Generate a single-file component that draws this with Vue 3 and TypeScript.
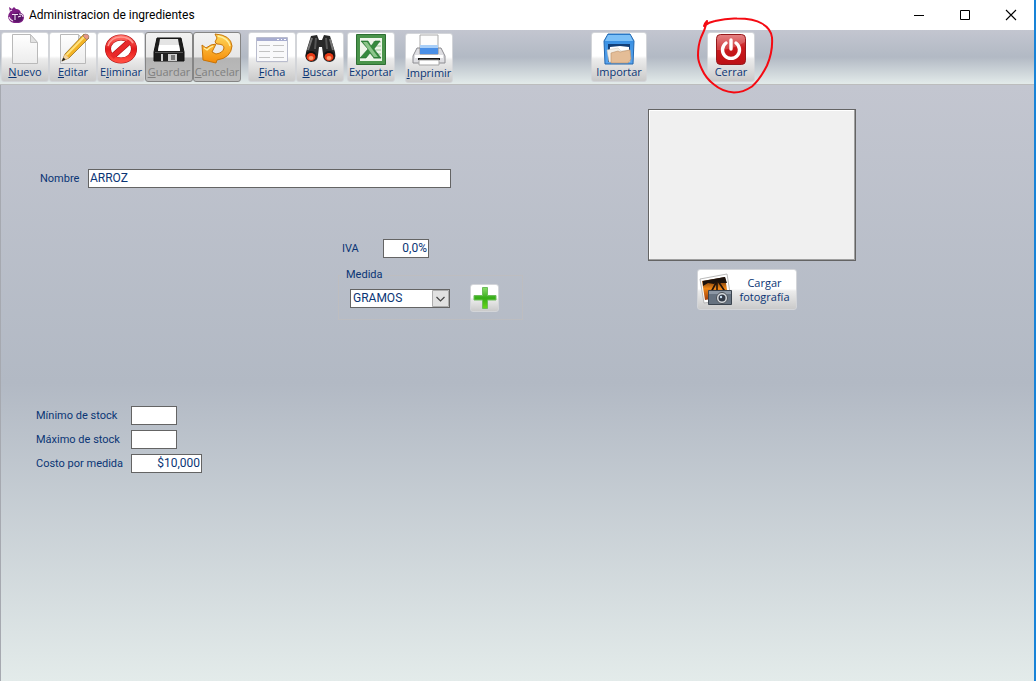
<script setup lang="ts">
import { ref } from 'vue'

interface ToolButton {
  id: string
  pre: string
  key: string
  post: string
  group: string
  disabled?: boolean
}

const tools: ToolButton[] = [
  { id: 'nuevo', pre: '', key: 'N', post: 'uevo', group: 'edit' },
  { id: 'editar', pre: '', key: 'E', post: 'ditar', group: 'edit' },
  { id: 'eliminar', pre: 'E', key: 'l', post: 'iminar', group: 'edit' },
  { id: 'guardar', pre: '', key: 'G', post: 'uardar', group: 'edit', disabled: true },
  { id: 'cancelar', pre: '', key: 'C', post: 'ancelar', group: 'edit', disabled: true },
  { id: 'ficha', pre: '', key: 'F', post: 'icha', group: 'view' },
  { id: 'buscar', pre: '', key: 'B', post: 'uscar', group: 'view' },
  { id: 'exportar', pre: 'Exportar', key: '', post: '', group: 'export' },
  { id: 'imprimir', pre: '', key: 'I', post: 'mprimir', group: 'print' },
  { id: 'importar', pre: 'Importar', key: '', post: '', group: 'import' },
  { id: 'cerrar', pre: 'Cerrar', key: '', post: '', group: 'close' },
]

const groups = ['edit', 'view', 'export', 'print', 'import', 'close'].map((name) => ({
  name,
  items: tools.filter((t) => t.group === name),
}))

const nombre = ref('ARROZ')
const iva = ref('0,0%')
const medida = ref('GRAMOS')
const minimo = ref('')
const maximo = ref('')
const costo = ref('$10,000')
</script>

<template>
  <div class="window">
    <header class="titlebar">
      <svg class="app-icon" width="18" height="18" viewBox="0 0 18 18" aria-hidden="true">
        <path d="M2 1l3 2 2-2 2 2q4 0 5 4 3 1 3 4 0 5-5 6H7q-5-1-6-6 0-3 2-5z" fill="#7b1d82" />
        <path d="M6 8q6-3 9 0 2 4-1 7-4 2-7 0-3-3-1-7z" fill="#5a1668" />
        <path d="M5 8.500h6M8 8.500V14M11 11l3-1M3 5l2-1M2 11q1 3 4 4M12 8q4 0 4 3" fill="none" stroke="#f3e4f4" stroke-width="1.100" />
      </svg>
      <h1 class="title">Administracion de ingredientes</h1>
      <div class="controls">
        <button type="button" aria-label="Minimizar">
          <svg width="12" height="12" viewBox="0 0 12 12"><path d="M1 6.500h10" stroke="#000" /></svg>
        </button>
        <button type="button" aria-label="Maximizar">
          <svg width="12" height="12" viewBox="0 0 12 12"><path d="M1.500 1.500h9v9h-9z" fill="none" stroke="#000" /></svg>
        </button>
        <button type="button" aria-label="Cerrar ventana">
          <svg width="12" height="12" viewBox="0 0 12 12"><path d="M1 1l10 10M11 1L1 11" stroke="#000" stroke-width="1.100" /></svg>
        </button>
      </div>
    </header>

    <nav class="toolbar">
      <div v-for="g in groups" :key="g.name" class="group" :class="g.name">
        <button v-for="t in g.items" :key="t.id" type="button" class="tool" :disabled="t.disabled">
          <svg v-if="t.id === 'nuevo' || t.id === 'editar'" width="34" height="34" viewBox="0 0 34 34">
            <defs>
              <linearGradient id="paper" x2="0" y2="1"><stop stop-color="#fff" /><stop offset="1" stop-color="#ececec" /></linearGradient>
            </defs>
            <path d="M4.500 1.500h18l7 8v21h-25z" fill="url(#paper)" stroke="#b9b9b9" />
            <path d="M22.500 1.500v8h7z" fill="#e2e2e2" stroke="#c0c0c0" />
            <g v-if="t.id === 'editar'">
              <path d="M6 28l3-7L28 1l5 4L13 25z" fill="#f3b324" stroke="#8a6417" stroke-width=".7" />
              <path d="M10.500 22L29 3" stroke="#ffe27d" stroke-width="1.800" />
              <path d="M27 3l2-2q4 0 4 3l-2 3z" fill="#e99684" stroke="#8c7a73" stroke-width=".7" />
              <path d="M6 28l3-7 4 4z" fill="#f3d3a0" /><path d="M5.500 28.500l2-4 2 2z" fill="#222" />
            </g>
          </svg>
          <svg v-else-if="t.id === 'eliminar'" width="34" height="34" viewBox="0 0 34 34">
            <defs><linearGradient id="ban" x2="0" y2="1"><stop stop-color="#ff6a62" /><stop offset=".5" stop-color="#e3191b" /><stop offset="1" stop-color="#ff4a3e" /></linearGradient></defs>
            <ellipse cx="17" cy="16" rx="13" ry="11.500" fill="none" stroke="#a90e12" stroke-width="6" />
            <path d="M8 24L26 8" stroke="#a90e12" stroke-width="6" />
            <ellipse cx="17" cy="16" rx="13" ry="11.500" fill="none" stroke="url(#ban)" stroke-width="5" />
            <path d="M8 24L26 8" stroke="#e8282a" stroke-width="5" />
            <path d="M4 13q3-9 13-9 8 0 12 6" fill="none" stroke="#ff9a92" stroke-width="1.500" />
          </svg>
          <svg v-else-if="t.id === 'guardar'" width="34" height="34" viewBox="0 0 34 34">
            <path d="M5 5h24l3 14v9H2v-9z" fill="#1d1d1d" stroke="#111" stroke-linejoin="round" />
            <path d="M8 6h18l2 12H6z" fill="#e4e4e4" /><path d="M7 12h20l1 6H6z" fill="#fff" />
            <path d="M3 19.500h28" stroke="#555" />
            <path d="M9 21h16v7H9z" fill="#cfcfcf" /><path d="M11 21h5v7h-5z" fill="#222" /><path d="M19 22h4v5h-4z" fill="#777" />
          </svg>
          <svg v-else-if="t.id === 'cancelar'" width="34" height="34" viewBox="0 0 34 34">
            <defs><linearGradient id="undo" x2="0" y2="1"><stop stop-color="#ffd95a" /><stop offset="1" stop-color="#f58a07" /></linearGradient></defs>
            <path d="M15 1q16 1 17 12-1 12-15 14l-1 3L3 27 2 12l4 3q5-4 10-4l-4 8 4 2q7-1 8-6 0-4-7-4l-2-2 2-4z" fill="url(#undo)" stroke="#c77408" stroke-linejoin="round" />
            <path d="M18 3q10 2 12 10M4 15l3 2q3-3 6-4" fill="none" stroke="#fff0a3" stroke-width="1.300" />
          </svg>
          <svg v-else-if="t.id === 'ficha'" width="34" height="34" viewBox="0 0 34 34">
            <path d="M1.500 4.500h31v24h-31z" fill="#f9f9fb" stroke="#b9bccd" />
            <path d="M2 5h30v3H2z" fill="#a8add0" /><path d="M22 6.500h2M26 6.500h1M29 6.500h2" stroke="#fff" />
            <path d="M4 12.500h11M18 12.500h11M4 18.500h11M18 18.500h11M4 24.500h11M18 24.500h11" stroke="#c3c3c3" />
            <path d="M2 29.500h31" stroke="#dedede" />
          </svg>
          <svg v-else-if="t.id === 'buscar'" width="34" height="34" viewBox="0 0 34 34">
            <path d="M8 3l6-1 2 5h3l2-5 6 1 5 16q2 9-5 10-7 0-7-8l-1-7h-3l-1 8q0 7-7 7-7-1-5-10z" fill="#292929" />
            <path d="M9 5L5 17M27 6l3 11" stroke="#777" stroke-width="2" />
            <path d="M13 5l-1 11M23 5l1 11" stroke="#555" stroke-width="2" />
            <ellipse cx="8" cy="23" rx="5.500" ry="5" fill="#111" /><ellipse cx="26" cy="23" rx="5.500" ry="5" fill="#111" />
            <ellipse cx="8" cy="24" rx="4.500" ry="4" fill="#e83b17" /><ellipse cx="26" cy="24" rx="4.500" ry="4" fill="#e83b17" />
            <ellipse cx="8" cy="25" rx="2.500" ry="2" fill="#ff9b6b" /><ellipse cx="26" cy="25" rx="2.500" ry="2" fill="#ff9b6b" />
          </svg>
          <svg v-else-if="t.id === 'exportar'" width="34" height="34" viewBox="0 0 34 34">
            <path d="M2.500 1.500h29v30h-29z" fill="#4a944b" stroke="#2e6f33" />
            <path d="M6 5h22v23H6z" fill="#eef5ea" />
            <path d="M19 9h8M19 13h8M19 17h8M19 21h8M19 25h8" stroke="#9cc498" />
            <path d="M7 8h7l3 5 4-5h5l-6 8 7 9h-7l-4-5-4 5H6l8-9z" fill="#358a3d" stroke="#1f6a2b" stroke-width=".6" />
            <path d="M9 9h4l11 15h-4z" fill="#8dc58b" />
          </svg>
          <svg v-else-if="t.id === 'imprimir'" width="34" height="34" viewBox="0 0 34 34">
            <path d="M8 1h18v17H8z" fill="#fcfcfc" stroke="#a9a9a9" />
            <path d="M5 14h3v6h18v-6h3l4 8v7H1v-7z" fill="#dedee2" stroke="#8c8c91" stroke-linejoin="round" />
            <path d="M8 12h18v8H8z" fill="#4a8fe6" /><path d="M8 11h18v3H8z" fill="#a8cef7" />
            <path d="M3 21h28v3H3z" fill="#fff" /><path d="M6 24h22v2H6z" fill="#151515" />
            <path d="M7 26h20v5H7z" fill="#fff" stroke="#a5a5a5" />
          </svg>
          <svg v-else-if="t.id === 'importar'" width="34" height="34" viewBox="0 0 34 34">
            <defs><linearGradient id="box" x2="0" y2="1"><stop stop-color="#2f8be0" /><stop offset="1" stop-color="#5aa4ee" /></linearGradient></defs>
            <path d="M6 1h22l4 7-1 23H3L2 8z" fill="url(#box)" stroke="#2367ae" stroke-linejoin="round" />
            <path d="M6 2h22l3 6H3z" fill="#7cc0f7" /><path d="M6 11h22v18H6z" fill="#123f78" />
            <path d="M8 14l10-1 9 1v13H7z" fill="#fff" /><path d="M5 17l11-2 3 3 9-1v12H7z" fill="#f3efe8" stroke="#cfc8bd" stroke-width=".5" />
            <path d="M9 20l7-2 2 1 10-2 1 9-3 4H9z" fill="#e4bd97" stroke="#bc9068" stroke-width=".6" />
          </svg>
          <svg v-else width="34" height="34" viewBox="0 0 34 34">
            <defs><linearGradient id="power" x2="0" y2="1"><stop stop-color="#df6768" /><stop offset=".45" stop-color="#c91a1e" /><stop offset="1" stop-color="#bd1014" /></linearGradient></defs>
            <rect x="2.500" y="1.500" width="29" height="30" rx="4" fill="url(#power)" stroke="#94191c" />
            <path d="M3 17q13 1 28-8v-3q0-4-4-4H7Q3 2 3 6z" fill="#fff" opacity=".18" />
            <path d="M12 10a8.500 8.500 0 1 0 10 0" fill="none" stroke="#fff" stroke-width="3.400" stroke-linecap="round" />
            <path d="M17 7v9" stroke="#fff" stroke-width="3.400" stroke-linecap="round" />
          </svg>
          <span>{{ t.pre }}<u v-if="t.key">{{ t.key }}</u>{{ t.post }}</span>
        </button>
        <svg v-if="g.name === 'close'" class="mark" width="80" height="80" viewBox="696 15 80 80" aria-hidden="true">
          <path d="M707 21q-2 2-3 5 5-4 11-5 12-3 22-2.500 17 0 25 5 9 5 10 14 1 14-5 28-7 14-15 21-9 6-18 6-12-1-20-8-8-6-12-15-4-8-4-14 0-10 3-18 4-8 6-16" fill="none" stroke="#f50a12" stroke-width="2" stroke-linecap="round" stroke-linejoin="round" />
        </svg>
      </div>
    </nav>

    <main class="form">
      <section class="fields">
        <div class="row name-row">
          <label for="nombre">Nombre</label>
          <input id="nombre" v-model="nombre" type="text" />
        </div>
        <div class="tax">
          <div class="row iva-row">
            <label for="iva">IVA</label>
            <input id="iva" v-model="iva" class="num small" type="text" />
          </div>
          <fieldset class="measure">
            <legend><label for="medida">Medida</label></legend>
            <div class="measure-body">
              <div class="select">
                <select id="medida" v-model="medida">
                  <option>GRAMOS</option>
                </select>
                <svg width="17" height="17" viewBox="0 0 17 17" aria-hidden="true">
                  <path d="M.5.5h16v16H.5z" fill="#e1e1e1" stroke="#adadad" />
                  <path d="M4.500 7l4 4 4-4" fill="none" stroke="#444" stroke-width="1.200" />
                </svg>
              </div>
              <button type="button" class="glossy add" aria-label="Agregar medida">
                <svg width="24" height="24" viewBox="0 0 24 24">
                  <defs><linearGradient id="plus" x2="0" y2="1"><stop stop-color="#8bdd6a" /><stop offset=".5" stop-color="#35ad16" /><stop offset="1" stop-color="#69d719" /></linearGradient></defs>
                  <path d="M9.500 1.500h5v8H23V14h-8.500v8.500h-5V14H1V9.500h8.500z" fill="url(#plus)" stroke="#6cbb5a" stroke-linejoin="round" />
                </svg>
              </button>
            </div>
          </fieldset>
        </div>
        <div class="stock">
          <label for="minimo">Mínimo de stock</label>
          <input id="minimo" v-model="minimo" class="num small" type="text" />
          <label for="maximo">Máximo de stock</label>
          <input id="maximo" v-model="maximo" class="num small" type="text" />
          <label for="costo">Costo por medida</label>
          <input id="costo" v-model="costo" class="num" type="text" />
        </div>
      </section>
      <aside class="photo">
        <div class="preview"></div>
        <button type="button" class="glossy load">
          <svg width="34" height="34" viewBox="0 0 34 34" aria-hidden="true">
            <defs><linearGradient id="sunset" x2="0" y2="1"><stop stop-color="#3c1606" /><stop offset=".5" stop-color="#ee8617" /><stop offset="1" stop-color="#a13c08" /></linearGradient></defs>
            <path d="M1 6l27-5 4 25-27 4z" fill="#fff" stroke="#aaa" stroke-width=".8" />
            <path d="M3 8l23-4 3 19-23 4z" fill="url(#sunset)" />
            <path d="M4 8l22-4 2 6-7 0-2-2-4 3-6-1-5 3z" fill="#1b120d" /><path d="M18 8l-7 13M19 8l8 12M18 8v10" stroke="#21130b" stroke-width="1.600" />
            <path d="M9.500 17.500h23v14h-23z" fill="#667280" stroke="#3b444f" stroke-linejoin="round" />
            <path d="M10 18h22v3H10z" fill="#8d98a5" />
            <circle cx="23" cy="25" r="5.500" fill="#d8dce0" stroke="#4b5158" /><circle cx="23" cy="25" r="3.500" fill="#343b47" /><circle cx="22" cy="24" r="1.200" fill="#c8dff2" />
          </svg>
          <span>Cargar fotografía</span>
        </button>
      </aside>
    </main>
  </div>
</template>

<style>
body {
  margin: 0;
}
</style>

<style scoped>
* {
  box-sizing: border-box;
}
.window {
  min-height: 100vh;
  display: flex;
  flex-direction: column;
  border-right: 2px solid #1883d7;
  background: #fff;
  color: #0a3575;
  font: 11px/14px "Open Sans", "Noto Sans", sans-serif;
}
button {
  font: inherit;
  color: inherit;
  padding: 0;
  margin: 0;
}
svg {
  display: block;
  flex: none;
}
.titlebar {
  height: 30px;
  display: flex;
  align-items: center;
  padding-left: 7px;
  gap: 4px;
  color: #000;
}
.title {
  flex: 1;
  margin: 0;
  font: 400 12px/16px Roboto, "Open Sans", sans-serif;
}
.controls {
  display: flex;
}
.controls button {
  width: 46px;
  height: 28px;
  display: grid;
  place-items: center;
  border: 0;
  background: none;
}
.toolbar {
  height: 55px;
  display: flex;
  align-items: flex-start;
  padding: 2px 0 0 1px;
  border-bottom: 1px solid #bcbdbd;
  background: linear-gradient(#c3c6d0, #b2b9c4 50%, #e3ebea);
}
.group {
  display: flex;
  position: relative;
}
.view {
  margin-left: 7px;
}
.export {
  margin-left: 3px;
}
.print {
  margin: 1px 0 0 10px;
}
.import {
  margin-left: 138px;
}
.import .tool {
  width: 56px;
}
.close {
  margin-left: 60px;
}
.tool,
.glossy {
  border: 1px solid #d3d5d9;
  border-radius: 3px;
  background: linear-gradient(#fff 48%, #ececec 54%, #cacaca);
}
.tool {
  width: 48px;
  height: 50px;
  display: flex;
  flex-direction: column;
  align-items: center;
  white-space: nowrap;
}
.tool:disabled {
  border-color: #858585;
  background: linear-gradient(#f2f2f2, #e6e6e6 50%, #b4b4b4 52%, #bcbcbc);
  color: #808080;
}
.tool span {
  margin-top: -2px;
}
.mark {
  position: absolute;
  left: -11px;
  top: -17px;
  pointer-events: none;
}
.form {
  flex: 1;
  display: flex;
  align-items: flex-start;
  border-left: 1px solid #a6a9b0;
  background: linear-gradient(#c3c6d0, #b2b9c4 50%, #e3ebea);
  font-family: Roboto, "Liberation Sans", sans-serif;
}
.fields {
  width: 647px;
  padding: 84px 0 0 35px;
}
.row {
  display: flex;
  align-items: center;
}
input,
select {
  height: 19px;
  border: 1px solid #646464;
  border-radius: 0;
  padding: 0 1px 1px;
  background: #fff;
  color: #0a3575;
  font: 12px/16px Roboto, "Liberation Sans", sans-serif;
}
.num {
  text-align: right;
  width: 71px;
}
.small {
  width: 46px;
}
.name-row {
  gap: 10px;
  padding-left: 4px;
}
.name-row label {
  width: 38px;
}
.name-row input {
  width: 363px;
}
.tax {
  margin: 51px 0 0 302px;
  width: 185px;
}
.iva-row {
  padding-left: 4px;
}
.iva-row label {
  width: 41px;
}
.measure {
  margin: 10px 0 0;
  padding: 2px 11px 7px;
  border: 1px solid #bdbdc0;
  min-width: 0;
}
.measure legend {
  margin-left: -6px;
  padding: 0 2px;
}
.measure-body {
  display: flex;
  align-items: center;
  gap: 20px;
}
.select {
  position: relative;
  width: 100px;
}
.select select {
  display: block;
  width: 100%;
  padding-left: 2px;
  appearance: none;
}
.select svg {
  position: absolute;
  right: 1px;
  top: 1px;
  pointer-events: none;
}
.add {
  width: 29px;
  height: 28px;
  display: grid;
  place-items: center;
}
.stock {
  margin-top: 86px;
  display: grid;
  grid-template-columns: 95px auto;
  justify-content: start;
  align-items: center;
  row-gap: 5px;
}
.photo {
  width: 208px;
  padding-top: 24px;
}
.preview {
  height: 152px;
  border: 1px solid #646464;
  background: #f0f0f0;
  box-shadow: inset -1px -1px #a0a0a0, inset 1px 1px #fff;
}
.load {
  width: 100px;
  height: 41px;
  margin: 8px 0 0 49px;
  display: flex;
  align-items: center;
  padding-left: 1px;
  font-family: "Open Sans", "Noto Sans", sans-serif;
}
.load span {
  flex: 1;
}
</style>
